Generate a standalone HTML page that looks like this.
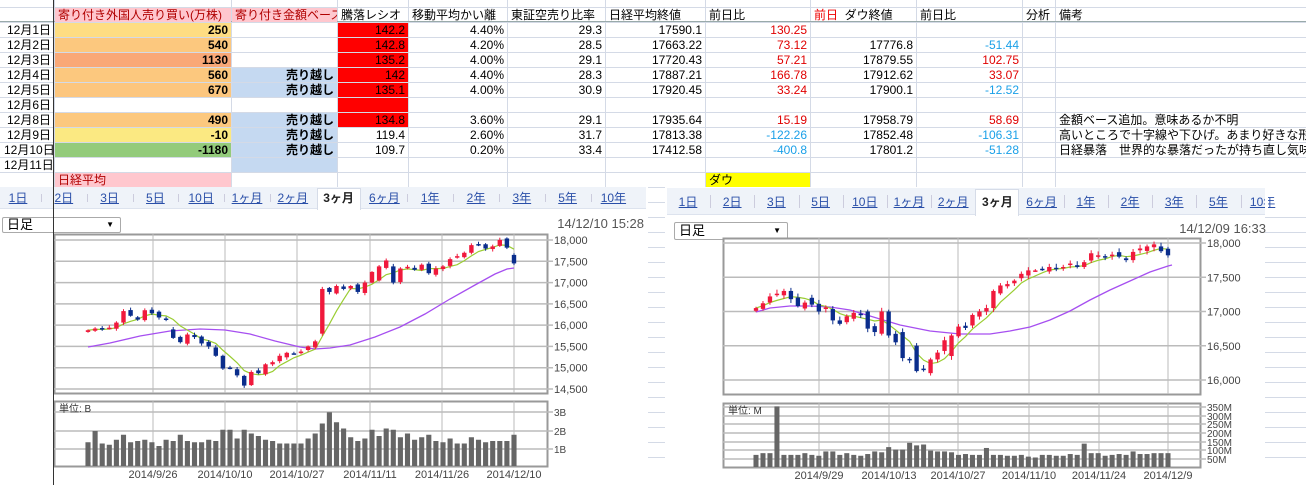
<!DOCTYPE html>
<html><head><meta charset="utf-8">
<style>
*{margin:0;padding:0;box-sizing:border-box}
body{width:1306px;height:485px;overflow:hidden;background:#fff;position:relative;font-family:"Liberation Sans","Noto Sans CJK JP",sans-serif;font-size:12px;color:#000}
.a{position:absolute}
.c{position:absolute;height:15px;line-height:15px;white-space:nowrap;overflow:hidden;padding:0 3px}
.r{text-align:right}
.tab{position:absolute;font-size:12px;color:#2a4fa8;text-decoration:underline;line-height:14px}
</style></head><body>
<div id="sheet"></div>
<svg class="a" style="left:0;top:0" width="1306" height="485" id="sv"></svg>
<script>
var S=document.getElementById('sheet');
function el(h){S.insertAdjacentHTML('beforeend',h)}
var X=[0,54,231,337,408,507,605,705,810,916,1022,1055,1306];
var g='';
for(var i=0;i<=30;i++){var y=7+15*i;if(i==0)y=7;else y=22+15*(i-1);g+='<div class="a" style="left:0;top:'+y+'px;width:1306px;height:1px;background:#d4dae6"></div>';}
for(var j=1;j<X.length-1;j++)g+='<div class="a" style="left:'+X[j]+'px;top:0;width:1px;height:485px;background:#d4dae6"></div>';
el(g);
el('<div class="a" style="left:0;top:21px;width:1306px;height:1px;background:#9aa"></div>');
function cell(c,r,txt,st,cls){var y=r<0?7:22+15*r;var x=X[c],w=X[c+1]-X[c];el('<div class="c '+(cls||'')+'" style="left:'+(x+1)+'px;top:'+(y+1)+'px;width:'+(w-1)+'px;height:14px;line-height:14px;'+(st||'')+'">'+txt+'</div>')}
var pink='background:#ffc7ce;color:#b00000;';
cell(1,-1,'寄り付き外国人売り買い(万株)',pink);cell(2,-1,'寄り付き金額ベース',pink);
cell(3,-1,'騰落レシオ');cell(4,-1,'移動平均かい離');cell(5,-1,'東証空売り比率');cell(6,-1,'日経平均終値');cell(7,-1,'前日比');
cell(8,-1,'<span style="color:#e00">前日</span>&nbsp; ダウ終値');cell(9,-1,'前日比');cell(10,-1,'分析');cell(11,-1,'備考');
var days=['12月1日','12月2日','12月3日','12月4日','12月5日','12月6日','12月8日','12月9日','12月10日','12月11日',''];
var A=[['250','#fedd82'],['540','#fcc87e'],['1130','#f9a877'],['560','#fcc87e'],['670','#fcc67e'],['',''],['490','#fcc87e'],['-10','#fbe982'],['-1180','#93cb7b'],['','']];
var B=[0,0,0,1,1,0,1,1,1,1];
var C=['142.2','142.8','135.2','142','135.1','','134.8','119.4','109.7',''];
var D=['4.40%','4.20%','4.00%','4.40%','4.00%','','3.60%','2.60%','0.20%',''];
var E=['29.3','28.5','29.1','28.3','30.9','','29.1','31.7','33.4',''];
var F=['17590.1','17663.22','17720.43','17887.21','17920.45','','17935.64','17813.38','17412.58',''];
var G=['130.25','73.12','57.21','166.78','33.24','','15.19','-122.26','-400.8',''];
var H=['','17776.8','17879.55','17912.62','17900.1','','17958.79','17852.48','17801.2',''];
var I=['','-51.44','102.75','33.07','-12.52','','58.69','-106.31','-51.28',''];
var K=['','','','','','','金額ベース追加。意味あるか不明','高いところで十字線や下ひげ。あまり好きな形じゃない','日経暴落　世界的な暴落だったが持ち直し気味?',''];
for(var r=0;r<10;r++){
 cell(0,r,days[r],'','r');
 cell(1,r,A[r][0],(A[r][1]?'background:'+A[r][1]+';':'')+'font-weight:bold;','r');
 cell(2,r,B[r]&&r!=9?'売り越し':'',B[r]?'background:#c5d9f1;font-weight:bold;':'','r');
 cell(3,r,C[r],r<=6?'background:#ff0000;':'','r');
 cell(4,r,D[r],'','r');cell(5,r,E[r],'','r');cell(6,r,F[r],'','r');
 cell(7,r,G[r],'color:'+(G[r][0]=='-'?'#1aa0e8':'#e00000'),'r');
 cell(8,r,H[r],'','r');
 cell(9,r,I[r],'color:'+(I[r][0]=='-'?'#1aa0e8':'#e00000'),'r');
 el('<div class="c" style="left:1056px;top:'+(23+15*r)+'px;width:250px;height:14px;line-height:14px;overflow:visible">'+K[r]+'</div>');
}
cell(1,10,'日経平均',pink);
cell(7,10,'ダウ','background:#ffff00;');
el('<div class="a" style="left:0;top:187px;width:648px;height:298px;background:#fff"></div>');
el('<div class="a" style="left:665px;top:187px;width:600px;height:298px;background:#fff"></div>');
function tabs(x0,y0,w,h,start,step,act,list){
 el('<div class="a" style="left:'+x0+'px;top:'+y0+'px;width:'+w+'px;height:'+h+'px;background:#eff3f9;border-bottom:1px solid #dde3ee"></div>');
 for(var i=0;i<list.length;i++){var cx=start+step*i;
  if(i==act){el('<div class="a" style="left:'+(cx-22)+'px;top:'+(y0+1)+'px;width:44px;height:'+h+'px;background:#fff;border:1px solid #d6dce8;border-bottom:none"></div>');
   el('<div class="tab" style="left:'+(cx-20)+'px;width:40px;text-align:center;top:'+(y0+h/2-7)+'px;color:#222;text-decoration:none;font-weight:bold">'+list[i]+'</div>');}
  else el('<div class="tab" style="left:'+(cx-20)+'px;width:40px;text-align:center;top:'+(y0+h/2-7)+'px">'+list[i]+'</div>');
  if(i>0&&i!=act&&i!=act+1)el('<div class="a" style="left:'+(cx-step/2)+'px;top:'+(y0+7)+'px;width:1px;height:'+(h-14)+'px;background:#ccd"></div>');
 }}
var TL=['1日','2日','3日','5日','10日','1ヶ月','2ヶ月','3ヶ月','6ヶ月','1年','2年','3年','5年','10年'];
tabs(0,187,646,22,18,45.8,7,TL);
el('<div class="a" style="left:1265px;top:187px;width:41px;height:30px;background:#fff"></div>');
tabs(667,188,598,27,688,44.2,7,TL);
el('<div class="a" style="left:1265px;top:187px;width:3px;height:30px;background:#fff"></div>');
function sel(x,y,w,h){el('<div class="a" style="left:'+x+'px;top:'+y+'px;width:'+w+'px;height:'+h+'px;border:1px solid #aaa;border-radius:2px;background:#fff;font-size:13px;line-height:'+(h-2)+'px;padding-left:4px">日足<span style="position:absolute;right:6px;font-size:8px">▼</span></div>')}
sel(2,217,119,16);sel(674,222,114,18);
el('<div class="a" style="left:520px;top:216px;width:124px;text-align:right;font-size:13px;color:#555">14/12/10 15:28</div>');
el('<div class="a" style="left:1140px;top:221px;width:126px;text-align:right;font-size:13px;color:#555">14/12/09 16:33</div>');

var sv='';
function frame(x1,y1,x2,y2){sv+='<rect x="'+x1+'.5" y="'+y1+'.5" width="'+(x2-x1)+'" height="'+(y2-y1)+'" fill="#fff" stroke="#999" stroke-width="2"/>'}
function hl(x1,x2,y){sv+='<line x1="'+x1+'" x2="'+x2+'" y1="'+y+'" y2="'+y+'" stroke="#bbb" stroke-width="1.5"/>'}
function vl(x,y1,y2){sv+='<line x1="'+x+'" x2="'+x+'" y1="'+y1+'" y2="'+y2+'" stroke="#bbb" stroke-width="1"/>'}
function tx(x,y,t,anc,fs,col){sv+='<text x="'+x+'" y="'+y+'" font-size="'+(fs||11)+'" fill="'+(col||'#444')+'" text-anchor="'+(anc||'start')+'" font-family="Liberation Sans Narrow, Liberation Sans, Noto Sans CJK JP, sans-serif">'+t+'</text>'}
function chart(o){
 frame(o.x1,o.y1,o.x2,o.y2);frame(o.x1,o.vy1,o.x2,o.vy2);
 o.pl.forEach(function(p){var y=o.py(p[0]);hl(o.x1,o.x2+6,y);tx(o.x2+7,y+4,p[1]);});
 o.vl.forEach(function(p){hl(o.x1,o.x2+6,p[0]);tx(o.x2+7,p[0]+4,p[1],'start',10);});
 o.vx.forEach(function(x,i){vl(x,o.y1,o.y2);vl(x,o.vy1,o.vy2);tx(x,o.vy2+12,o.dl[i],'middle',11);});
 tx(o.x1+5,o.vy1+11,o.unit,'start',10,'#333');
 var n=o.cl.length,st=(o.xe-o.xs)/(n-1),bw=st*0.72;
 for(var i=0;i<n;i++){var x=o.xs+st*i,v=o.vol[i]||o.vol[o.vol.length-1];var h=v*o.vk;sv+='<rect x="'+(x-bw/2)+'" y="'+(o.vy2-h)+'" width="'+bw+'" height="'+h+'" fill="#666"/>';}
 sv+='<polyline points="'+o.pu.map(function(p){return p[0]+','+p[1]}).join(' ')+'" fill="none" stroke="#a64ff0" stroke-width="1.3"/>';
 var pts=[];for(var i=0;i<n;i++){var s=0,c=0;for(var k=Math.max(0,i-4);k<=i;k++){s+=o.cl[k];c++;}pts.push((o.xs+st*i)+','+o.py(s/c));}
 sv+='<polyline points="'+pts.join(' ')+'" fill="none" stroke="#9acd32" stroke-width="1.2"/>';
 var cw=st*0.62;
 for(var i=0;i<n;i++){var x=o.xs+st*i,c=o.cl[i],op=i?o.cl[i-1]+((i*37)%7-3)*12:c-40;
  if(o.op&&o.op[i]!=null)op=o.op[i];
  var up=c>=op,col=up?'#f0193c':'#0a2d8c';var hi=Math.max(c,op)+20+(i*13)%40,lo=Math.min(c,op)-20-(i*7)%40;
  var ya=o.py(Math.max(c,op)),yb=o.py(Math.min(c,op));if(yb-ya<1.5)yb=ya+1.5;
  sv+='<line x1="'+x+'" x2="'+x+'" y1="'+o.py(hi)+'" y2="'+o.py(lo)+'" stroke="'+col+'" stroke-width="1"/>';
  sv+='<rect x="'+(x-cw/2)+'" y="'+ya+'" width="'+cw+'" height="'+(yb-ya)+'" fill="'+col+'"/>';}
}
var Lc=[15880,15920,15900,15940,16060,16330,16220,16130,16350,16280,16180,16150,15700,15600,15780,15720,15570,15500,15280,14980,15000,14820,14580,14900,14870,15080,15130,15280,15350,15330,15380,15500,15620,16850,16780,16920,16850,16920,16780,17000,17250,17380,17520,17000,17330,17370,17300,17420,17220,17330,17380,17550,17620,17700,17880,17900,17800,17850,18000,17820,17450];
var Lop=[];Lop[12]=15900;Lop[33]=15800;Lop[60]=17650;Lop[41]=17050;Lop[43]=17380;Lop[56]=17900;
chart({x1:54,y1:234,x2:547,y2:393,vy1:401,vy2:466,
 py:function(p){return 240+(18000-p)*0.04257},
 pl:[[18000,'18,000'],[17500,'17,500'],[17000,'17,000'],[16500,'16,500'],[16000,'16,000'],[15500,'15,500'],[15000,'15,000'],[14500,'14,500']],
 vl:[[412,'3B'],[431,'2B'],[449,'1B']],vx:[153,225,297,370,442,514],
 dl:['2014/9/26','2014/10/10','2014/10/27','2014/11/11','2014/11/26','2014/12/10'],unit:'単位: B',
 cl:Lc,op:Lop,xs:88,xe:514,
 vol:[1.9,2.8,1.8,1.7,2.1,2.5,1.9,2.0,2.1,1.9,1.6,2.1,2.0,2.5,2.0,1.9,1.9,2.1,2.0,2.9,2.9,2.2,2.9,2.6,2.4,2.1,2.0,1.8,1.8,1.8,1.8,2.2,2.6,3.4,4.3,3.5,3.0,2.3,2.0,2.2,2.9,2.4,3.0,2.9,2.3,2.6,2.1,2.3,2.5,2.0,1.9,2.2,1.8,1.8,2.3,2.1,1.9,2.0,2.0,2.0,2.5],vk:12.5,
 pu:[[88,347],[110,343],[140,336],[170,331],[200,329],[225,330],[250,334],[275,341],[300,347],[315,349],[330,348],[350,345],[375,337],[400,327],[425,314],[450,299],[475,285],[495,274],[507,269],[514,268]]});
var Rc=[17050,17120,17220,17260,17300,17180,17080,17130,17100,17000,17060,16870,16820,16930,16980,16950,16750,16700,17000,16650,16550,16320,16300,16130,16150,16300,16400,16580,16650,16780,16760,16950,17000,17050,17300,17380,17400,17450,17550,17600,17600,17620,17650,17630,17650,17700,17650,17720,17850,17820,17800,17830,17800,17750,17870,17920,17950,17980,17880,17820];
var Rop=[];Rop[5]=17300;Rop[8]=17200;Rop[16]=17000;Rop[19]=17000;Rop[21]=16700;Rop[23]=16500;Rop[25]=16100;Rop[28]=16350;Rop[34]=17050;Rop[58]=17950;
chart({x1:723,y1:238,x2:1200,y2:394,vy1:403,vy2:467,
 py:function(p){return 243+(18000-p)*0.0685},
 pl:[[18000,'18,000'],[17500,'17,500'],[17000,'17,000'],[16500,'16,500'],[16000,'16,000']],
 vl:[[407,'350M'],[416,'300M'],[424,'250M'],[433,'200M'],[442,'150M'],[450,'100M'],[459,'50M']],vx:[819,889,958,1029,1099,1168],
 dl:['2014/9/29','2014/10/13','2014/10/27','2014/11/10','2014/11/24','2014/12/9'],unit:'単位: M',
 cl:Rc,op:Rop,xs:756,xe:1168,
 vol:[70,80,80,350,70,70,70,80,70,65,90,90,70,80,70,65,75,90,85,115,100,100,140,125,130,95,90,90,85,70,75,70,70,110,70,70,65,65,70,60,55,70,70,65,65,75,70,135,80,80,65,70,75,70,90,75,75,80,80,80],vk:0.173,
 pu:[[756,312],[770,308],[790,306],[810,306],[830,307],[850,310],[870,316],[900,325],[930,331],[960,334],[990,334],[1010,331],[1030,327],[1050,320],[1070,311],[1090,300],[1110,290],[1130,281],[1150,272],[1168,266],[1172,265]]});
document.getElementById('sv').innerHTML=sv;
</script>
<div class="a" style="left:53px;top:187px;width:1px;height:298px;background:#333"></div>
<div class="a" style="left:53px;top:0;width:1px;height:187px;background:#333"></div>
</body></html>
